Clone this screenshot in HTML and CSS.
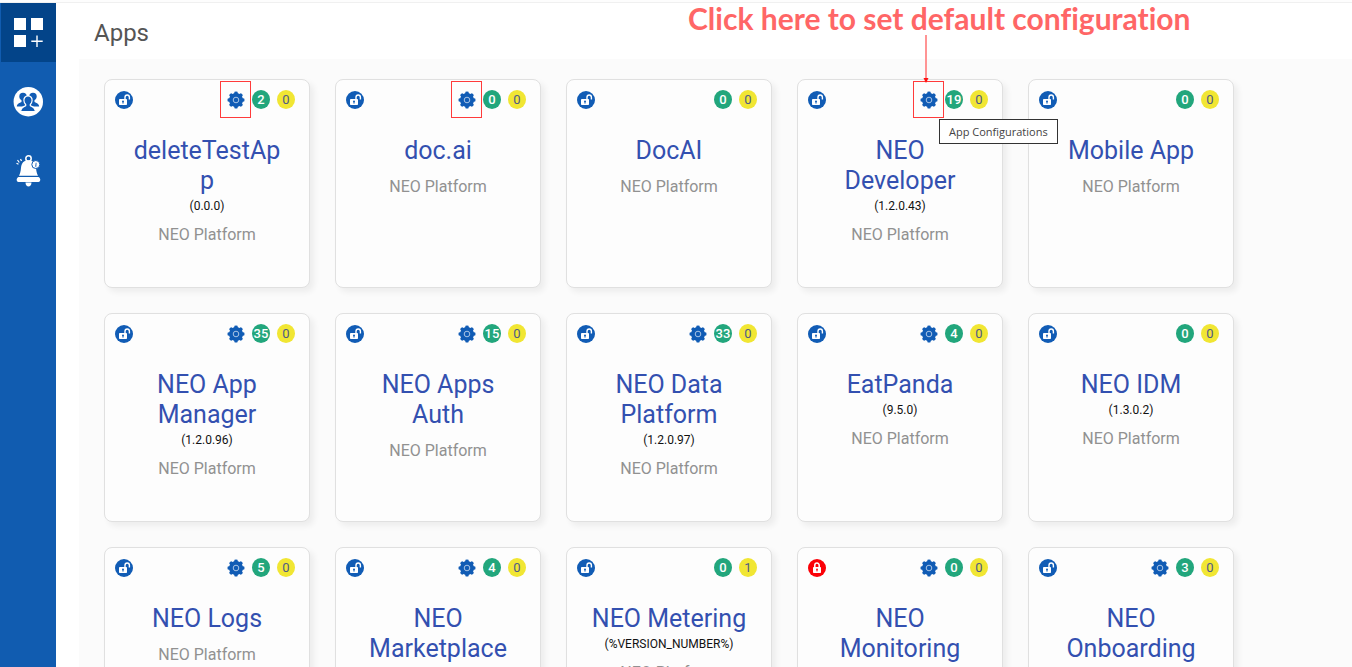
FILE: index.html
```html
<!DOCTYPE html>
<html lang="en">
<head>
<meta charset="utf-8">
<title>Apps</title>
<link rel="stylesheet" href="styles.css">
</head>
<body>
<svg class="sprite" aria-hidden="true">
  <symbol id="unlock" viewBox="0 0 18 18">
    <circle cx="9" cy="9" r="9" fill="#115cb5"/>
    <rect x="4" y="8" width="8" height="6" rx="0.8" fill="#fff"/>
    <path d="M10 8V6.2a2.2 2.2 0 0 1 4.4 0V8.4" fill="none" stroke="#fff" stroke-width="1.4"/>
    <circle cx="8" cy="10.6" r="1" fill="#115cb5"/><path d="M7.6 11h.8v1.7h-.8z" fill="#115cb5"/>
  </symbol>
  <symbol id="lock" viewBox="0 0 18 18">
    <circle cx="9" cy="9" r="9" fill="#fb0007"/>
    <rect x="5" y="8" width="8" height="6" rx="0.8" fill="#fff"/>
    <path d="M6.8 8V6.3a2.2 2.2 0 0 1 4.4 0V8" fill="none" stroke="#fff" stroke-width="1.5"/>
    <circle cx="9" cy="10.5" r="0.9" fill="#fb0007"/><path d="M8.6 11h.8v1.6h-.8z" fill="#fb0007"/>
  </symbol>
  <symbol id="gear" viewBox="0 0 18 18">
    <g fill="#115cb5">
      <circle cx="9" cy="9" r="7"/>
      <path d="M7.5.8q1.5-.7 3 0l.6 3h-4.200zM7.500 17.200q1.500.7 3 0l.6-3h-4.200zM.8 7.500q-.7 1.500 0 3l3 .6v-4.200zM17.200 7.500q.7 1.500 0 3l-3 .6v-4.200z"/>
      <path transform="rotate(45 9 9)" d="M7.500.8q1.500-.7 3 0l.6 3h-4.200zM7.500 17.200q1.500.7 3 0l.6-3h-4.200zM.8 7.500q-.7 1.500 0 3l3 .6v-4.200zM17.200 7.500q.7 1.500 0 3l-3 .6v-4.200z"/>
    </g>
    <circle cx="9" cy="9" r="2.800" fill="none" stroke="#a9c5e6" stroke-width="1"/>
  </symbol>
</svg>
<div class="topline"></div>
<div class="shell">
  <nav class="sidebar" aria-label="Main">
    <a class="nav-item active" href="#apps" aria-label="Apps">
      <svg width="30" height="30" viewBox="0 0 30 30" fill="#fff"><path d="M0 0h12v12H0zM17 0h12v12H17zM0 17h12v12H0zM22.300 17.500h1.400v5h5v1.400h-5v5h-1.400v-5h-5v-1.400h5z"/></svg>
    </a>
    <a class="nav-item" href="#users" aria-label="Users">
      <svg width="30" height="30" viewBox="0 0 30 30">
        <circle cx="15.300" cy="14.700" r="14.700" fill="#fff"/>
        <g fill="#115cb5">
          <circle cx="10" cy="9.500" r="3.700"/><circle cx="20" cy="9.500" r="3.700"/>
          <path d="M3.800 19.500c.2-3 3-3.500 4.700-4.500V12h4v7.500zM26.200 19.500c-.2-3-3-3.500-4.700-4.500V12h-4v7.500z"/>
          <path stroke="#fff" stroke-width="1.200" d="M15 9c2.700 0 4.200 1.800 4.100 4.500-.1 1.700-.8 3-1.800 4v1.200c2 1 4.900 1.400 5.100 6H7.600c.2-4.600 3.100-5 5.100-6v-1.200c-1-1-1.700-2.300-1.800-4C10.800 10.800 12.300 9 15 9z"/>
        </g>
      </svg>
    </a>
    <a class="nav-item" href="#alerts" aria-label="Notifications">
      <svg width="30" height="34" viewBox="0 0 30 34">
        <circle cx="15.500" cy="4.500" r="2.700" fill="none" stroke="#fff" stroke-width="1.500"/>
        <path fill="#fff" d="M15.500 6.300c5 0 7 3 7.500 7.500.3 4 1 6 2 8H6c1-2 1.700-4 2-8C8.500 9.300 10.500 6.300 15.500 6.300zM5.500 23h20c2.400 1 2.400 4.500 0 5h-20c-2.400-.5-2.400-4 0-5zM12.500 28.500h6c0 5.200-6 5.200-6 0z"/>
        <circle cx="22.800" cy="10.500" r="4" fill="#fff" stroke="#115cb5" stroke-width="1"/>
        <path d="M22.200 12.700l.5-4h.8l-.2 4z" fill="#115cb5"/>
        <path d="M7.500 5l1 2M4.500 6l1.800 2.500M3.500 9.200l2 1" stroke="#fff" stroke-width="1.200"/>
      </svg>
    </a>
  </nav>
  <main class="main">
    <h1 class="page-title">Apps</h1>
    <section class="grid">
      <article class="card">
        <div class="bar"><svg class="icon"><use href="#unlock"/></svg><button class="gear marked" aria-label="App Configurations"><svg class="icon"><use href="#gear"/></svg></button><span class="badge green">2</span><span class="badge yellow">0</span></div>
        <h2 class="name">deleteTestApp</h2><p class="version">(0.0.0)</p><p class="platform">NEO Platform</p>
      </article>
      <article class="card">
        <div class="bar"><svg class="icon"><use href="#unlock"/></svg><button class="gear marked" aria-label="App Configurations"><svg class="icon"><use href="#gear"/></svg></button><span class="badge green">0</span><span class="badge yellow">0</span></div>
        <h2 class="name">doc.ai</h2><p class="platform">NEO Platform</p>
      </article>
      <article class="card">
        <div class="bar"><svg class="icon"><use href="#unlock"/></svg><span class="badge green">0</span><span class="badge yellow">0</span></div>
        <h2 class="name">DocAI</h2><p class="platform">NEO Platform</p>
      </article>
      <article class="card">
        <div class="bar"><svg class="icon"><use href="#unlock"/></svg><button class="gear marked" aria-describedby="tip" aria-label="App Configurations"><svg class="icon"><use href="#gear"/></svg></button><span class="badge green">19</span><span class="badge yellow">0</span></div>
        <h2 class="name">NEO Developer</h2><p class="version">(1.2.0.43)</p><p class="platform">NEO Platform</p>
        <div class="callout">Click here to set default configuration</div>
        <svg class="arrow" width="7" height="48" viewBox="0 0 7 48"><path d="M2 0h2v44H2z" fill="#ff9494"/><path d="M0.500 43h5l-2.500 5z" fill="#f11"/></svg>
        <div class="tooltip" id="tip" role="tooltip">App Configurations</div>
      </article>
      <article class="card">
        <div class="bar"><svg class="icon"><use href="#unlock"/></svg><span class="badge green">0</span><span class="badge yellow">0</span></div>
        <h2 class="name">Mobile App</h2><p class="platform">NEO Platform</p>
      </article>
      <article class="card">
        <div class="bar"><svg class="icon"><use href="#unlock"/></svg><button class="gear" aria-label="App Configurations"><svg class="icon"><use href="#gear"/></svg></button><span class="badge green">35</span><span class="badge yellow">0</span></div>
        <h2 class="name">NEO App Manager</h2><p class="version">(1.2.0.96)</p><p class="platform">NEO Platform</p>
      </article>
      <article class="card">
        <div class="bar"><svg class="icon"><use href="#unlock"/></svg><button class="gear" aria-label="App Configurations"><svg class="icon"><use href="#gear"/></svg></button><span class="badge green">15</span><span class="badge yellow">0</span></div>
        <h2 class="name">NEO Apps Auth</h2><p class="platform">NEO Platform</p>
      </article>
      <article class="card">
        <div class="bar"><svg class="icon"><use href="#unlock"/></svg><button class="gear" aria-label="App Configurations"><svg class="icon"><use href="#gear"/></svg></button><span class="badge green">33</span><span class="badge yellow">0</span></div>
        <h2 class="name">NEO Data Platform</h2><p class="version">(1.2.0.97)</p><p class="platform">NEO Platform</p>
      </article>
      <article class="card">
        <div class="bar"><svg class="icon"><use href="#unlock"/></svg><button class="gear" aria-label="App Configurations"><svg class="icon"><use href="#gear"/></svg></button><span class="badge green">4</span><span class="badge yellow">0</span></div>
        <h2 class="name">EatPanda</h2><p class="version">(9.5.0)</p><p class="platform">NEO Platform</p>
      </article>
      <article class="card">
        <div class="bar"><svg class="icon"><use href="#unlock"/></svg><span class="badge green">0</span><span class="badge yellow">0</span></div>
        <h2 class="name">NEO IDM</h2><p class="version">(1.3.0.2)</p><p class="platform">NEO Platform</p>
      </article>
      <article class="card">
        <div class="bar"><svg class="icon"><use href="#unlock"/></svg><button class="gear" aria-label="App Configurations"><svg class="icon"><use href="#gear"/></svg></button><span class="badge green">5</span><span class="badge yellow">0</span></div>
        <h2 class="name">NEO Logs</h2><p class="platform">NEO Platform</p>
      </article>
      <article class="card">
        <div class="bar"><svg class="icon"><use href="#unlock"/></svg><button class="gear" aria-label="App Configurations"><svg class="icon"><use href="#gear"/></svg></button><span class="badge green">4</span><span class="badge yellow">0</span></div>
        <h2 class="name">NEO Marketplace</h2>
      </article>
      <article class="card">
        <div class="bar"><svg class="icon"><use href="#unlock"/></svg><span class="badge green">0</span><span class="badge yellow">1</span></div>
        <h2 class="name">NEO Metering</h2><p class="version">(%VERSION_NUMBER%)</p><p class="platform">NEO Platform</p>
      </article>
      <article class="card">
        <div class="bar"><svg class="icon"><use href="#lock"/></svg><button class="gear" aria-label="App Configurations"><svg class="icon"><use href="#gear"/></svg></button><span class="badge green">0</span><span class="badge yellow">0</span></div>
        <h2 class="name">NEO Monitoring</h2>
      </article>
      <article class="card">
        <div class="bar"><svg class="icon"><use href="#unlock"/></svg><button class="gear" aria-label="App Configurations"><svg class="icon"><use href="#gear"/></svg></button><span class="badge green">3</span><span class="badge yellow">0</span></div>
        <h2 class="name">NEO Onboarding</h2>
      </article>
    </section>
  </main>
</div>
</body>
</html>
```

FILE: styles.css
```css
* { box-sizing: border-box; }
body {
  margin: 0;
  height: 100vh;
  display: flex;
  flex-direction: column;
  overflow: hidden;
  background: #fff;
  font-family: Roboto, "Liberation Sans", sans-serif;
}
h1, h2, p { margin: 0; font-weight: 400; }
.sprite { position: absolute; width: 0; height: 0; }
.topline { flex: none; height: 3px; background: #fdfdfd; border-bottom: 1px solid #f0f0f0; }
.shell { flex: 1; min-height: 0; display: flex; }
.sidebar { flex: none; width: 56px; background: #115cb0; display: flex; flex-direction: column; gap: 10px; }
.nav-item { height: 59px; display: flex; align-items: center; justify-content: center; }
.nav-item.active { background: #034489; border-left: 1px solid #115cb0; }
.main { flex: 1; min-width: 0; padding-left: 23px; display: flex; flex-direction: column; }
.page-title { flex: none; height: 56px; padding: 0 15px; font-size: 24px; line-height: 60px; color: #555; }
.grid {
  flex: 1;
  min-height: 0;
  padding: 20px 25px;
  background: #fbfbfb;
  display: grid;
  grid-template-columns: repeat(auto-fill, 206px);
  grid-auto-rows: 209px;
  gap: 25px;
}
.card {
  position: relative;
  padding: 10px 24px;
  background: #fdfdfd;
  border: 1px solid #e0e0e0;
  border-radius: 8px;
  box-shadow: 4px 4px 6px rgba(0, 0, 0, 0.06);
  text-align: center;
}
.bar { display: flex; align-items: center; gap: 7px; height: 19px; margin: 0 -10px 27px -14px; }
.icon { display: block; width: 18px; height: 18px; }
.bar > .icon { margin-right: auto; }
.gear { position: relative; padding: 0; border: 0; background: none; width: 18px; height: 18px; }
.marked::after { content: ""; position: absolute; inset: -10px -6px -9px -7px; border: 1px solid #ff3b3b; }
.badge { width: 18px; height: 19px; border-radius: 50%; font-size: 13px; line-height: 19px; display: flex; justify-content: center; }
.green { background: #22a67c; color: #fff; font-weight: 500; }
.yellow { background: #f1e633; color: #4f5b86; }
.name { margin-bottom: 1px; font-size: 25px; line-height: 30px; color: #3350b0; overflow-wrap: anywhere; }
.version { font-size: 12px; line-height: 18px; color: #111; }
.platform { padding-top: 8px; font-size: 16px; line-height: 24px; color: #919191; }
.callout {
  position: absolute;
  left: -110px;
  top: -80px;
  font: 700 30px/36px Lato, sans-serif;
  font-variant-ligatures: none;
  color: #ff6666;
  white-space: nowrap;
}
.arrow { position: absolute; left: 125px; top: -45px; }
.tooltip {
  position: absolute;
  z-index: 1;
  left: 141px;
  top: 39px;
  padding: 0 9px;
  border: 1px solid #333;
  background: #fff;
  color: #444;
  font: 11px/23px "Open Sans", sans-serif;
  white-space: nowrap;
}
```
